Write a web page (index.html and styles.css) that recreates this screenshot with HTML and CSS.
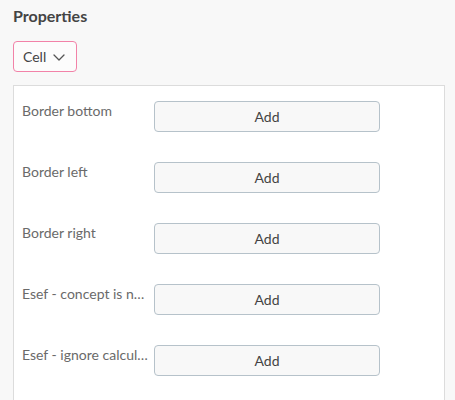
FILE: index.html
```html
<!DOCTYPE html>
<html>
<head>
<meta charset="utf-8">
<link rel="stylesheet" href="styles.css">
</head>
<body>
<div class="page">
  <h1 class="title">Properties</h1>
  <button class="dropdown"><span>Cell</span>
    <svg class="chev" width="12" height="7" viewBox="0 0 12 7"><path d="M1 1 L6 6 L11 1" fill="none" stroke="#555" stroke-width="1.3" stroke-linecap="round" stroke-linejoin="round"/></svg>
  </button>
  <div class="panel">
    <div class="row"><div class="label">Border bottom</div><button class="add">Add</button></div>
    <div class="row"><div class="label">Border left</div><button class="add">Add</button></div>
    <div class="row"><div class="label">Border right</div><button class="add">Add</button></div>
    <div class="row"><div class="label">Esef - concept is not used for tagging</div><button class="add">Add</button></div>
    <div class="row"><div class="label">Esef - ignore calculation inconsistency</div><button class="add">Add</button></div>
  </div>
</div>
</body>
</html>
```
FILE: styles.css
```css
html, body {
  margin: 0;
  padding: 0;
  background: #f8f8f8;
  font-family: Lato, "Open Sans", sans-serif;
  overflow: hidden;
  height: 400px;
}
.page {
  padding-left: 13px;
  padding-right: 10px;
}
.title {
  margin: 6px 0 0 0;
  font-size: 16px;
  line-height: 20px;
  font-weight: 700;
  color: #444;
}
.dropdown {
  margin-top: 15px;
  height: 31px;
  width: 64px;
  box-sizing: border-box;
  border: 1px solid #f282a8;
  border-radius: 4px;
  background: #fcfcfc;
  display: flex;
  align-items: center;
  gap: 7px;
  padding: 0 0 0 9px;
  font-family: Lato, sans-serif;
  font-size: 14px;
  color: #444;
}
.chev { margin-top: 1px; }
.panel {
  margin-top: 13px;
  width: 432px;
  box-sizing: border-box;
  background: #fff;
  border: 1px solid #dcdcdc;
  border-bottom: none;
  padding: 15px 0 0 8px;
  display: flex;
  flex-direction: column;
  gap: 30px;
  height: 315px;
}
.row {
  display: flex;
  align-items: flex-start;
}
.label {
  width: 128px;
  margin-right: 4px;
  font-size: 14px;
  line-height: 20px;
  color: #6a6a6a;
  white-space: nowrap;
  overflow: hidden;
  text-overflow: ellipsis;
}
.add {
  width: 226px;
  height: 31px;
  box-sizing: border-box;
  border: 1px solid #b6c2ca;
  border-radius: 4px;
  background: #f8f8f8;
  font-family: Lato, sans-serif;
  font-size: 14px;
  color: #444;
  padding: 0;
}
```
